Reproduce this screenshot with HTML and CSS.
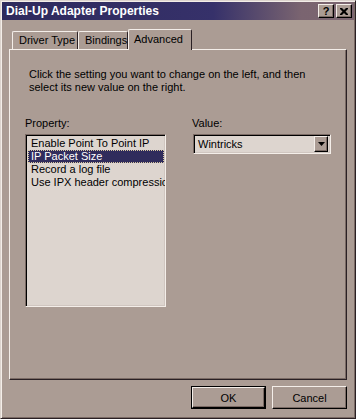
FILE: index.html
```html
<!DOCTYPE html>
<html lang="en">

<head>
    <meta charset="utf-8">
    <meta name="viewport" content="width=device-width, initial-scale=1.0">
    <title>Dial-Up Adapter Properties</title>

    <link rel="stylesheet" href="styles.css">
</head>

<body>

    <div class="vindue">
        <div class="titel">
            <span>Dial-Up Adapter Properties</span>
            <div class="titelknapper">
                <button class="tk">?</button>
                <button class="tk">
                    <svg width="8" height="7" viewBox="0 0 8 7">
                        <path d="M0 0h2l2 2 2-2h2v1l-2.5 2.5L8 6v1H6L4 5 2 7H0V6l2.5-2.5L0 1z" fill="#000"/>
                    </svg>
                </button>
            </div>
        </div>

        <div class="indhold">
            <nav class="faner">
                <div class="fane f1">Driver Type</div>
                <div class="fane f2">Bindings</div>
                <div class="fane f3 valgt">Advanced</div>
            </nav>

            <section class="panel">
                <p class="intro">Click the setting you want to change on the left, and then<br>select its new value on the right.</p>

                <div class="felter">
                    <div class="kolonne">
                        <label>Property:</label>
                        <ul class="liste">
                            <li>Enable Point To Point IP</li>
                            <li class="markeret">IP Packet Size</li>
                            <li>Record a log file</li>
                            <li>Use IPX header compression</li>
                        </ul>
                    </div>
                    <div class="kolonne">
                        <label>Value:</label>
                        <div class="combo">
                            <span>Wintricks</span>
                            <div class="pil">
                                <svg width="7" height="4" viewBox="0 0 7 4"><path d="M0 0h7L3.5 4z" fill="#000"/></svg>
                            </div>
                        </div>
                    </div>
                </div>
            </section>

            <div class="knapper">
                <div class="standard"><button class="knap">OK</button></div>
                <button class="knap">Cancel</button>
            </div>
        </div>
    </div>

</body>

</html>
```

FILE: styles.css
```css
body {
    margin: 0;
    background-color: #ab9c94;
    font-family: 'Liberation Sans', Arial, sans-serif;
    font-size: 11px;
    color: #000;
}

.vindue {
    box-sizing: border-box;
    width: 356px;
    height: 419px;
    border: 1px solid;
    border-color: #dcd4ce #2a2024 #2a2024 #dcd4ce;
    box-shadow: inset 1px 1px #f4eee9, inset -1px -1px #7a6a64;
    padding: 1px;
    display: flex;
    flex-direction: column;
}

/* TITEL */
.titel {
    height: 18px;
    background: linear-gradient(to right, #2e2a5c 0%, #36316a 60%, #7a6470 85%, #7c6670 100%);
    color: #fff;
    font-weight: bold;
    font-size: 12px;
    display: flex;
    align-items: center;
    justify-content: space-between;
    padding-left: 4px;
    padding-right: 2px;
}

.titelknapper {
    display: flex;
    gap: 2px;
}

.tk {
    box-sizing: border-box;
    width: 16px;
    height: 14px;
    padding: 0;
    background-color: #ab9c94;
    border: 1px solid;
    border-color: #f4eee9 #000 #000 #f4eee9;
    box-shadow: inset -1px -1px #7a6a64;
    font-family: 'Liberation Sans', Arial, sans-serif;
    font-weight: bold;
    font-size: 11px;
    line-height: 10px;
    display: flex;
    align-items: center;
    justify-content: center;
}

/* FANER */
.indhold {
    padding: 9px 7px 0 7px;
}

.faner {
    display: flex;
    align-items: flex-end;
    height: 20px;
    padding-left: 3px;
}

.fane {
    box-sizing: border-box;
    height: 18px;
    border: 1px solid;
    border-bottom: none;
    border-color: #f4eee9 #2a2024 #f4eee9 #f4eee9;
    border-radius: 2px 2px 0 0;
    padding-left: 6px;
    line-height: 17px;
}

.f1 { width: 66px; }
.f2 { width: 50px; }
.f3 { width: 64px; }

.valgt {
    height: 21px;
    margin-bottom: -1px;
    position: relative;
    z-index: 1;
    background-color: #ab9c94;
    line-height: 18px;
    padding-left: 5px;
}

/* PANEL */
.panel {
    box-sizing: border-box;
    width: 338px;
    height: 331px;
    border: 1px solid;
    border-color: #f4eee9 #2a2024 #2a2024 #f4eee9;
    box-shadow: inset -1px -1px #7a6a64;
    padding: 18px 15px 0 15px;
}

.intro {
    margin: 0 0 0 4px;
    line-height: 13px;
}

.felter {
    display: flex;
    gap: 26px;
    margin-top: 23px;
}

.kolonne {
    width: 141px;
    display: flex;
    flex-direction: column;
}

.kolonne label {
    line-height: 13px;
    margin-bottom: 4px;
}

.liste {
    box-sizing: border-box;
    height: 173px;
    margin: 0;
    padding: 2px 1px;
    list-style: none;
    background-color: #ddd5cf;
    border: 1px solid;
    border-color: #7a6a64 #f4eee9 #f4eee9 #7a6a64;
    box-shadow: inset 1px 1px #000, inset -1px -1px #d0c6c0;
    overflow: hidden;
}

.liste li {
    height: 13px;
    line-height: 13px;
    padding-left: 3px;
    white-space: nowrap;
    margin-left: 1px;
}

.markeret {
    background-color: #302c5c;
    color: #fff;
    outline: 1px dotted #d8c8a0;
    outline-offset: -1px;
}

.combo {
    box-sizing: border-box;
    height: 20px;
    margin-left: 1px;
    background-color: #ddd5cf;
    border: 1px solid;
    border-color: #7a6a64 #f4eee9 #f4eee9 #7a6a64;
    box-shadow: inset 1px 1px #000, inset -1px -1px #d0c6c0;
    display: flex;
    align-items: center;
    justify-content: space-between;
    padding: 2px 2px 2px 4px;
}

.pil {
    box-sizing: border-box;
    width: 14px;
    height: 16px;
    background-color: #ab9c94;
    border: 1px solid;
    border-color: #f4eee9 #000 #000 #f4eee9;
    box-shadow: inset -1px -1px #7a6a64;
    display: flex;
    align-items: center;
    justify-content: center;
}

/* KNAPPER */
.knapper {
    display: flex;
    justify-content: flex-end;
    gap: 6px;
    margin-top: 6px;
    width: 338px;
}

.standard {
    border: 1px solid #000;
}

.knap {
    box-sizing: border-box;
    width: 75px;
    height: 23px;
    background-color: #ab9c94;
    border: 1px solid;
    border-color: #f4eee9 #000 #000 #f4eee9;
    box-shadow: inset -1px -1px #7a6a64;
    font-family: 'Liberation Sans', Arial, sans-serif;
    font-size: 11px;
    padding: 0;
}

.standard .knap {
    width: 73px;
    height: 21px;
}
```
